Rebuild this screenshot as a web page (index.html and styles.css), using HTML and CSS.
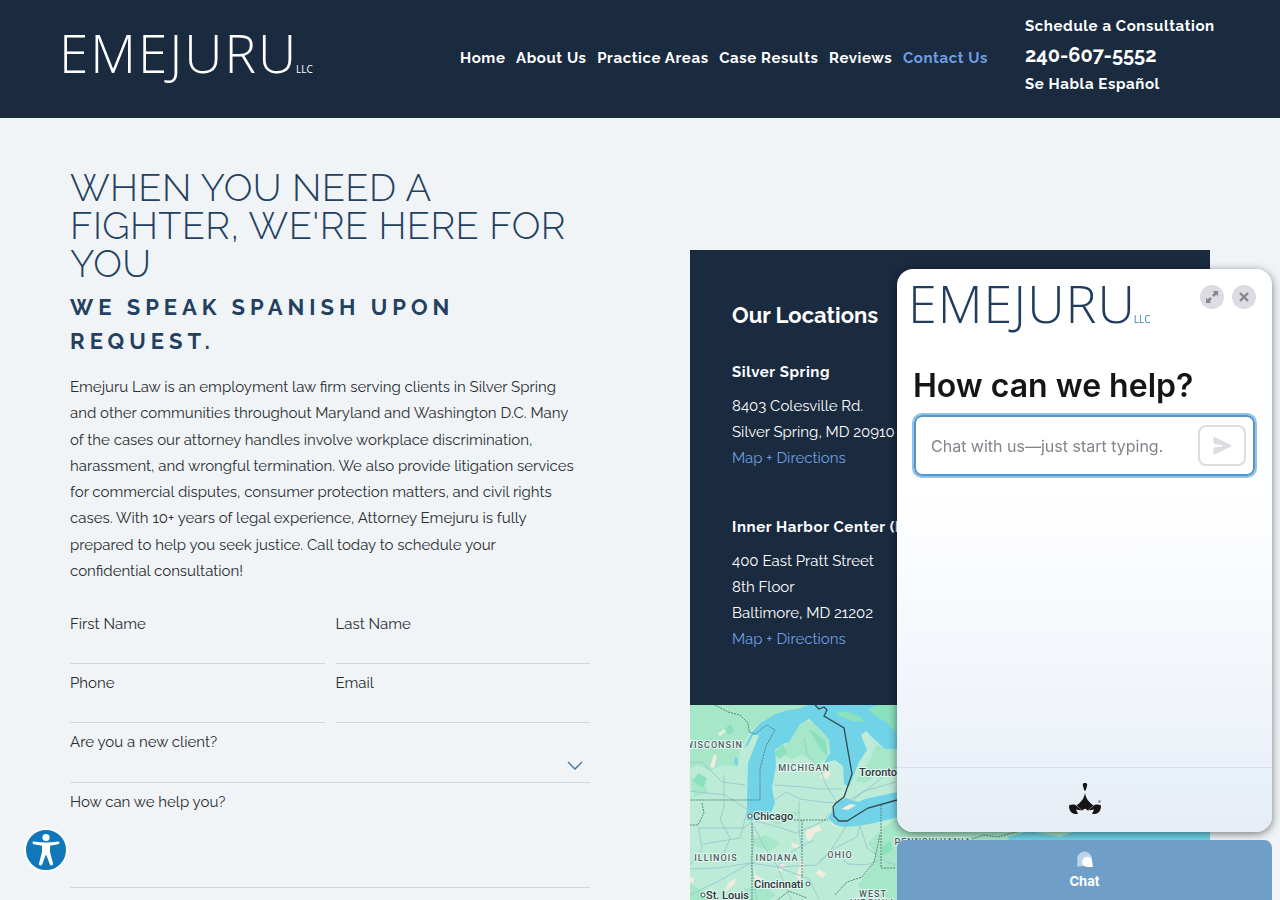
FILE: index.html
```html
<!DOCTYPE html>
<html lang="en">
<head>
<meta charset="utf-8">
<meta name="viewport" content="width=device-width, initial-scale=1">
<title>Contact Us | Emejuru LLC</title>
<link rel="stylesheet" href="styles.css">
</head>
<body>
<header class="header">
  <a class="logo" href="#">EMEJURU<small class="logo-llc">LLC</small></a>
  <nav class="nav">
    <a href="#">Home</a>
    <a href="#">About Us</a>
    <a href="#">Practice Areas</a>
    <a href="#">Case Results</a>
    <a href="#">Reviews</a>
    <a class="current" href="#">Contact Us</a>
  </nav>
  <div class="consult">
    <span>Schedule a Consultation</span>
    <a class="phone" href="tel:2406075552">240-607-5552</a>
    <span>Se Habla Español</span>
  </div>
</header>

<main class="main">
  <section class="intro">
    <h1 class="title">When You Need a<br>Fighter, We're Here for<br>You</h1>
    <h2 class="subtitle">We Speak Spanish Upon<br>Request.</h2>
    <p class="copy">Emejuru Law is an employment law firm serving clients in Silver Spring<br>
    and other communities throughout Maryland and Washington D.C. Many<br>
    of the cases our attorney handles involve workplace discrimination,<br>
    harassment, and wrongful termination. We also provide litigation services<br>
    for commercial disputes, consumer protection matters, and civil rights<br>
    cases. With 10+ years of legal experience, Attorney Emejuru is fully<br>
    prepared to help you seek justice. Call today to schedule your<br>
    confidential consultation!</p>
    <form class="form">
      <div class="field"><label for="first">First Name</label><input id="first" type="text"></div>
      <div class="field"><label for="last">Last Name</label><input id="last" type="text"></div>
      <div class="field"><label for="phone">Phone</label><input id="phone" type="tel"></div>
      <div class="field"><label for="email">Email</label><input id="email" type="email"></div>
      <div class="field wide select-field">
        <label for="client">Are you a new client?</label>
        <select id="client"><option></option><option>Yes</option><option>No</option></select>
        <svg class="chevron" viewBox="0 0 16 10" aria-hidden="true"><path d="M1 1l7 7 7-7"/></svg>
      </div>
      <div class="field wide"><label for="message">How can we help you?</label><textarea id="message"></textarea></div>
    </form>
  </section>

  <aside class="locations">
    <div class="panel">
      <h2 class="panel-title">Our Locations</h2>
      <h3 class="place">Silver Spring</h3>
      <address class="address">8403 Colesville Rd.<br>Silver Spring, MD 20910<br><a href="#">Map + Directions</a></address>
      <h3 class="place">Inner Harbor Center (by appointment only)</h3>
      <address class="address">400 East Pratt Street<br>8th Floor<br>Baltimore, MD 21202<br><a href="#">Map + Directions</a></address>
    </div>
    <svg class="map" viewBox="0 0 520 196" preserveAspectRatio="xMinYMin slice" role="img" aria-label="Map of office locations">
      <rect width="520" height="196" fill="#bcecd7"/>
      <g fill="#a6e7ca">
        <path d="M0 0H125L105 12 82 12 68 18 58 30 50 45 48 62 32 60 20 66 8 60 0 64Z"/>
        <path d="M98 28L112 14 132 22 139 36 138 54 126 59 112 50 101 54 90 48 97 38Z"/>
        <path d="M180 55L186 40 206 43V66L190 66 176 78 166 76Z"/>
        <path d="M0 72L14 78 18 88 4 92ZM80 116L92 108 112 106 106 111 88 120ZM62 134L76 130 90 138 80 146 66 142Z"/>
        <path d="M192 124L210 110V196H176L168 180 180 164 186 150 178 138Z"/>
        <path d="M0 178L12 186 18 196H0ZM54 184L74 178 86 190 78 196H50Z"/>
        <path d="M210 100L520 80V196H210Z"/>
      </g>
      <g fill="#8be0bd">
        <path d="M119 24l8 5 8 6 3 16-6-4-7-12zM84 48l9-9 4 9-8 6zM8 68l9 5-4 10-10-7zM34 24l5 6 5-4-3-7zM192 142l8-7 3 10-11 6z"/>
      </g>
      <g fill="#f2ecdc">
        <path d="M28 29l6-5 2 2-6 5zM24 49l3 2-3 12-4-1zM130 71l8-5 3 2-4 6-7-1zM116 126l13-6 3 5-7 3-5 8-4-3zM102 138l8 2-3 3-6-1zM90 158l5 2-4 7-4-2zM111 153l3 8-4 14-4-3 3-9zM64 169l9 5-4 10-6-5zM38 178l8-5-1 6-10 8zM21 183l4 7-4 6-3-8zM0 172l4 2-1 5-3-2zM129 164l7 5-4 4-6-5zM74 178l8-2 3 4-8 3zM142 116l8 4-3 2-6-3z"/>
      </g>
      <g fill="#70d3e8">
        <path d="M54 43L62 27 70 18 86 9 98 5 108 4 118 0H208V44L195 44 184 34 176 26 171 30 177 45 169 57 159 82 154 79 153 61 145 55 134 58 140 48 139 35 132 26 119 14 110 19 99 37 93 39 85 45 86 61 82 83 85 98 78 115 57 115 57 91 58 58 69 30 63 30 58 40Z"/>
        <path d="M138 113L148 97 156 93 168 97 175 94 207 87H230V102L205 113 184 118 169 121 154 122 145 120Z"/>
        <path d="M45 52l3 2-1 7-3-3z"/>
        <path d="M318 132L340 126 370 132 400 120H520V196H340Z"/>
      </g>
      <path fill="#8be0bd" d="M145 6l14 1 12 5 3 5-12-1-13-5zM178 4l10-4h20v30l-12-13-9-5z"/>
      <path fill="#f2ecdc" d="M151 104l9-5 6 1-8 5z"/>
      <g class="roads">
        <path d="M0 58L12 57 32 77 55 80M34 70V102L30 115 40 133 32 153M0 86L35 90 58 105 62 118 75 143 87 161 102 196"/>
        <path d="M8 123H54L61 117M9 123L12 144 0 160M0 164L28 163 60 158 88 162 126 160 141 145 157 120"/>
        <path d="M85 80L114 82 130 84 152 84M85 95L96 87 110 94 132 97 148 98M114 33L117 49 130 64 137 82 148 99"/>
        <path d="M153 100L174 86 206 77M164 94L179 83 207 61M65 116L85 121 106 128 134 116 139 109M109 96V126L112 145"/>
        <path d="M62 122L64 136 61 158 67 196M87 162L104 145 124 135M88 162L119 174 129 194M126 160L147 142 167 132 171 116M142 145L158 159 176 160 190 155"/>
        <path d="M170 121L177 143 196 157 208 160M0 190L31 175 55 161 73 153M13 139L50 133 57 107"/>
      </g>
      <path class="borders" d="M25 0L38 7 50 10 58 18 59 27 65 29 77 20 85 25 76 41 70 64 70 95H0M62 118V196M104 115H138M112 115V173M191 100V163H206M12 98L14 108 8 120 0 120M190 130L184 157 172 172 157 177 145 190M86 196L99 186 117 193M282 134L294 130 308 132 330 126"/>
      <path class="frontier" d="M125 0L129 4 134 2 137 5 134 11 154 23 162 69 154 92 146 98 143 102 144 111 149 116 157 116 178 103 207 95"/>
      <g class="state" text-anchor="middle">
        <text x="24" y="43">WISCONSIN</text><text x="114" y="66">MICHIGAN</text>
        <text x="26" y="156">ILLINOIS</text><text x="87" y="156">INDIANA</text>
        <text x="150" y="153">OHIO</text><text x="183" y="192">WEST</text>
        <text x="183" y="201">VIRGINIA</text><text x="243" y="140">PENNSYLVANIA</text>
      </g>
      <g class="city">
        <text x="63" y="115">Chicago</text><text x="169" y="71">Toronto</text>
        <text x="64" y="183">Cincinnati</text><text x="16" y="194">St. Louis</text>
      </g>
      <g class="dots"><circle cx="60" cy="111" r="2"/><circle cx="118" cy="179" r="2"/><circle cx="13" cy="190" r="2"/></g>
    </svg>
  </aside>
</main>

<button class="accessibility" type="button" aria-label="Accessibility options">
  <svg viewBox="0 0 44 44" aria-hidden="true"><circle cx="22" cy="22" r="21" fill="#1177b8" stroke="#fff" stroke-width="2"/><circle cx="22" cy="9.500" r="3.600" fill="#fff"/><path fill="#fff" d="M10 13.500Q22 15.500 34 13.500C36 13.300 36 15.800 34.300 16.200L26 17.700V24L29 35.500C29.500 37.500 26.500 38.200 25.800 36.200L22.300 27H21.700L18.200 36.200C17.500 38.200 14.500 37.500 15 35.500L18 24V17.700L9.700 16.200C8 15.800 8 13.300 10 13.500Z"/></svg>
</button>

<section class="chat" aria-label="Chat">
  <div class="chat-head">
    <div class="logo chat-logo">EMEJURU<small class="logo-llc">LLC</small></div>
    <div class="chat-actions">
      <button type="button" aria-label="Expand"><svg viewBox="0 0 24 24" aria-hidden="true"><path fill="#86868c" d="M12.700 6H18V11.300L16.300 9.600 14 11.900 12.100 10 14.400 7.700ZM11.300 18H6V12.700L7.700 14.400 10 12.100 11.900 14 9.600 16.300Z"/></svg></button>
      <button type="button" aria-label="Close"><svg viewBox="0 0 24 24" aria-hidden="true"><path d="M8 8l8 8M16 8l-8 8" stroke="#86868c" stroke-width="2.400"/></svg></button>
    </div>
  </div>
  <h2 class="chat-title">How can we help?</h2>
  <form class="chat-form">
    <input class="chat-input" type="text" aria-label="Message" placeholder="Chat with us—just start typing.">
    <button class="send" type="button" aria-label="Send"><svg viewBox="0 0 20 20" aria-hidden="true"><path fill="#dcdce3" d="M1 3.300C1 1.500 2 1 3.500 1.600L18 8.500C19.400 9.200 19.400 10.300 18 11L3.500 18C2 18.700 1 18 1 16.400L2 11.600 10.500 10.500V9L2 8Z"/></svg></button>
  </form>
  <div class="chat-foot">
    <svg viewBox="0 0 34 34" aria-hidden="true"><g fill="#151515"><path d="M17 0C19.600 0 19.500 2 18.700 4L17.700 7.500H16.300L15.300 4C14.500 2 14.400 0 17 0ZM17 10C18 16 21 19 25.500 22.500L19.500 27.500Q17 24 14.500 27.500L8.500 22.500C13 19 16 16 17 10Z"/><path d="M1 22.500C3 21.500 5 21.300 7.500 22L14 27.500 8 26.500 10 31C3.500 31.500 1 28 1 22.500ZM33 22.500C31 21.500 29 21.300 26.500 22L20 27.500 26 26.500 24 31C30.500 31.500 33 28 33 22.500Z"/></g><circle cx="31.500" cy="18.500" r="1.500" fill="#9b9da3"/></svg>
  </div>
</section>
<button class="chat-tab" type="button">
  <svg viewBox="0 0 18 18" aria-hidden="true"><path fill="#bcd3e9" d="M1 16.500L1.500 11A7.400 7.400 0 1 1 16 8.500V14L8 16Z"/><path fill="#fff" d="M11.300 6.800A5 5 0 0 1 16.300 12L16.800 17H11.300A5 5 0 0 1 11.300 6.800Z"/></svg>
  <span>Chat</span>
</button>
</body>
</html>
```
FILE: styles.css
```css
* { box-sizing: border-box; }
body {
  margin: 0;
  background: #f0f4f7;
  color: #2a2d31;
  font: 15px/1.75 Raleway, Lato, sans-serif;
}
h1, h2, h3, p { margin: 0; }
a { color: inherit; text-decoration: none; }
button { border: 0; padding: 0; cursor: pointer; font: inherit; }
svg { display: block; }

.header {
  display: grid;
  grid-template-columns: 396px minmax(0, 528px) 1fr;
  padding: 13px 64px 19px;
  background: #1a2a3f;
  color: #fff;
  font-weight: 700;
  line-height: 26px;
  letter-spacing: 0.04em;
}
.logo {
  color: inherit;
  font: 300 53px/60px "Open Sans", sans-serif;
  letter-spacing: 1px;
  white-space: nowrap;
}
.header .logo { margin: 10px 0 0 -5px; letter-spacing: 2px; }
.logo .logo-llc {
  margin-left: -2px;
  font-size: 10px;
  font-weight: 400;
  letter-spacing: 0;
}
.nav {
  display: flex;
  justify-content: space-between;
  padding-top: 32px;
}
.current { color: #6f9fe0; }
.consult {
  display: flex;
  flex-direction: column;
  padding-left: 37px;
  white-space: nowrap;
}
.phone { font-size: 20px; line-height: 32px; letter-spacing: 0; }

.main {
  display: grid;
  grid-template-columns: 1fr 1fr;
  gap: 100px;
  padding: 51px 70px 0;
}
.title {
  color: #23405f;
  font-size: 38px;
  font-weight: 300;
  line-height: 38px;
  letter-spacing: 0.01em;
  text-transform: uppercase;
}
.subtitle {
  margin-top: 7px;
  color: #23405f;
  font-size: 22px;
  line-height: 34px;
  letter-spacing: 5px;
  text-transform: uppercase;
}
.copy { margin-top: 16px; }
.form {
  display: grid;
  grid-template-columns: 1fr 1fr;
  column-gap: 11px;
  margin-top: 21px;
}
.field { display: flex; flex-direction: column; padding-top: 6px; line-height: 26px; }
.wide { grid-column: 1 / -1; }
.field input, .field select, .field textarea {
  width: 100%;
  height: 28px;
  border: 0;
  border-bottom: 1px solid #d2d7dc;
  border-radius: 0;
  background: transparent;
  appearance: none;
  font: inherit;
}
.field input { height: 27px; }
.field textarea { height: 73px; resize: none; }
.select-field { position: relative; }
.chevron {
  position: absolute;
  right: 7px;
  bottom: 12px;
  width: 16px;
  height: 10px;
  fill: none;
  stroke: #3d749e;
  stroke-width: 1.4;
  pointer-events: none;
}

.locations { margin-top: 81px; }
.panel {
  padding: 50px 42px 53px;
  background: #1a2a3f;
  color: #fff;
  line-height: 26px;
  white-space: nowrap;
}
.panel-title { font-size: 22px; line-height: 30px; }
.place {
  margin-top: 29px;
  font-size: 15px;
  letter-spacing: 0.04em;
}
.address { margin-top: 8px; font-style: normal; }
.address + .place { margin-top: 43px; }
.address a { color: #6f9fe0; }
.map { width: 100%; height: 196px; font-family: Roboto, sans-serif; }
.roads { fill: none; stroke: #9dcbd0; stroke-width: 1; }
.borders { fill: none; stroke: #5b8279; stroke-width: 1; stroke-dasharray: 2 1; }
.frontier { fill: none; stroke: #34494f; stroke-width: 1.3; }
.map text { paint-order: stroke; stroke: #e6f8f0; stroke-width: 2px; }
.state { font-size: 9px; font-weight: 500; letter-spacing: 1px; fill: #4d5e63; }
.city { font-size: 11px; font-weight: 500; fill: #29363b; }
.dots { fill: #fff; stroke: #46565b; }

.accessibility {
  position: fixed;
  left: 24px;
  bottom: 28px;
  width: 44px;
  height: 44px;
  background: none;
}

.chat {
  position: fixed;
  right: 8px;
  bottom: 68px;
  display: flex;
  flex-direction: column;
  width: 375px;
  height: 563px;
  border-radius: 16px;
  background: linear-gradient(#fff 40%, #ecf1f9 88%, #e6eef6);
  box-shadow: 0 2px 8px rgba(0, 0, 0, 0.5);
  color: #151515;
  font-family: Inter, sans-serif;
}
.chat-head {
  display: flex;
  justify-content: space-between;
  padding: 4px 16px 0 11px;
}
.chat-logo { color: #203d60; font-size: 52px; }
.chat-logo .logo-llc { color: #4682aa; }
.chat-actions { display: flex; gap: 8px; padding-top: 12px; }
.chat-actions button {
  width: 24px;
  height: 24px;
  border-radius: 50%;
  background: #dcdce3;
}
.chat-title {
  margin: 16px 16px 0;
  font-size: 32px;
  font-weight: 600;
  line-height: 42px;
}
.chat-form {
  display: flex;
  align-items: center;
  gap: 8px;
  margin: 8px 17px 0;
  padding: 8px 7px 8px 8px;
  border: 2px solid #5795c8;
  border-radius: 8px;
  outline: 2px solid #8bc3ea;
  background: #fff;
}
.chat-input {
  flex: 1;
  min-width: 0;
  border: 0;
  padding: 0 0 0 7px;
  background: none;
  outline: none;
  color: #151515;
  font: 16px/24px Inter, sans-serif;
}
.chat-input::placeholder { color: #84848c; opacity: 1; }
.send {
  display: grid;
  place-items: center;
  width: 48px;
  height: 41px;
  border: 2px solid #dcdce3;
  border-radius: 8px;
  background: #fff;
}
.send svg { width: 20px; height: 20px; }
.chat-foot {
  display: grid;
  place-items: center;
  height: 65px;
  margin-top: auto;
  border-top: 1px solid #d3e0e9;
  border-radius: 0 0 16px 16px;
  background: linear-gradient(#e9f1f9, #e6edf5);
}
.chat-foot svg { width: 34px; height: 34px; }
.chat-tab {
  position: fixed;
  right: 8px;
  bottom: 0;
  display: flex;
  flex-direction: column;
  align-items: center;
  gap: 3px;
  width: 375px;
  height: 60px;
  padding-top: 10px;
  border-radius: 8px 8px 0 0;
  background: #6f9fc9;
  color: #fff;
  font: 700 13px/20px Inter, sans-serif;
}
.chat-tab svg { width: 18px; height: 18px; }
```
